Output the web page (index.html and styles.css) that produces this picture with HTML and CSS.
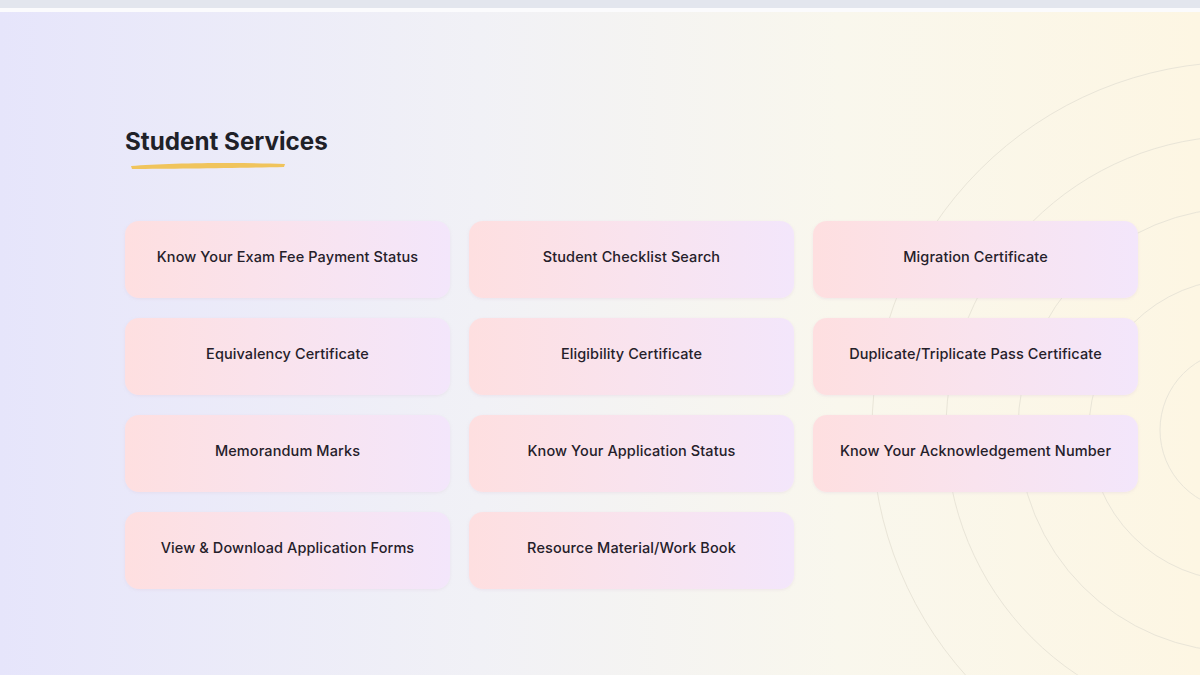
FILE: index.html
```html
<!DOCTYPE html>
<html lang="en">
<head>
    <meta charset="UTF-8">
    <meta name="viewport" content="width=device-width, initial-scale=1.0">
    <title>Student Services</title>
    <link rel="stylesheet" href="styles.css">
</head>
<body>
    <div class="topbar"></div>
    <main class="page">
        <svg class="rings" width="1200" height="663" viewBox="0 12 1200 663" aria-hidden="true">
            <circle cx="1240" cy="430" r="80"/>
            <circle cx="1240" cy="430" r="151"/>
            <circle cx="1240" cy="430" r="222"/>
            <circle cx="1240" cy="430" r="294"/>
            <circle cx="1240" cy="430" r="368"/>
        </svg>
        <section class="services">
            <h2 class="title">Student Services</h2>
            <svg class="brush" width="160" height="10" viewBox="0 0 160 10" aria-hidden="true">
                <path d="M3 6 C 40 3, 110 2, 157 4 L 156 7 C 110 8, 45 9, 4 9 Z"/>
            </svg>
            <div class="grid">
                <a class="card" href="#">Know Your Exam Fee Payment Status</a>
                <a class="card" href="#">Student Checklist Search</a>
                <a class="card" href="#">Migration Certificate</a>
                <a class="card" href="#">Equivalency Certificate</a>
                <a class="card" href="#">Eligibility Certificate</a>
                <a class="card" href="#">Duplicate/Triplicate Pass Certificate</a>
                <a class="card" href="#">Memorandum Marks</a>
                <a class="card" href="#">Know Your Application Status</a>
                <a class="card" href="#">Know Your Acknowledgement Number</a>
                <a class="card" href="#">View &amp; Download Application Forms</a>
                <a class="card" href="#">Resource Material/Work Book</a>
            </div>
        </section>
    </main>
</body>
</html>
```

FILE: styles.css
```css
body {
    margin: 0;
    font-family: Inter, "Open Sans", sans-serif;
    background: #fff;
    overflow: hidden;
}
.topbar {
    height: 8px;
    background-color: #e3e6ee;
    border-bottom: 4px solid #fbfbfd;
}
.page {
    position: relative;
    height: 663px;
    background-image: linear-gradient(to right, #e6e5fb, #f1f1f6 40%, #f9f7ed 70%, #fdf6e3);
    overflow: hidden;
}
.rings {
    position: absolute;
    top: 0;
    left: 0;
}
.rings circle {
    fill: none;
    stroke: #e9e5d8;
    stroke-width: 1;
}
.services {
    position: relative;
    padding: 115px 0 0 125px;
}
.title {
    margin: 0;
    font-size: 24.2px;
    font-weight: 700;
    color: #1f2128;
    line-height: 30px;
}
.brush {
    display: block;
    margin: 3px 0 0 3px;
}
.brush path {
    fill: #f0c45c;
}
.grid {
    display: grid;
    grid-template-columns: repeat(3, 325px);
    column-gap: 19px;
    row-gap: 20px;
    margin-top: 51px;
}
.card {
    display: flex;
    align-items: center;
    justify-content: center;
    height: 71px;
    padding-bottom: 6px;
    border-radius: 14px;
    background-image: linear-gradient(to right, #fedfe0, #f9e3ee 50%, #f3e6fb);
    box-shadow: 0 1px 3px rgba(220, 200, 220, 0.35);
    color: #25202a;
    font-size: 14.5px;
    font-weight: 500;
    letter-spacing: 0.1px;
    text-decoration: none;
}
```
